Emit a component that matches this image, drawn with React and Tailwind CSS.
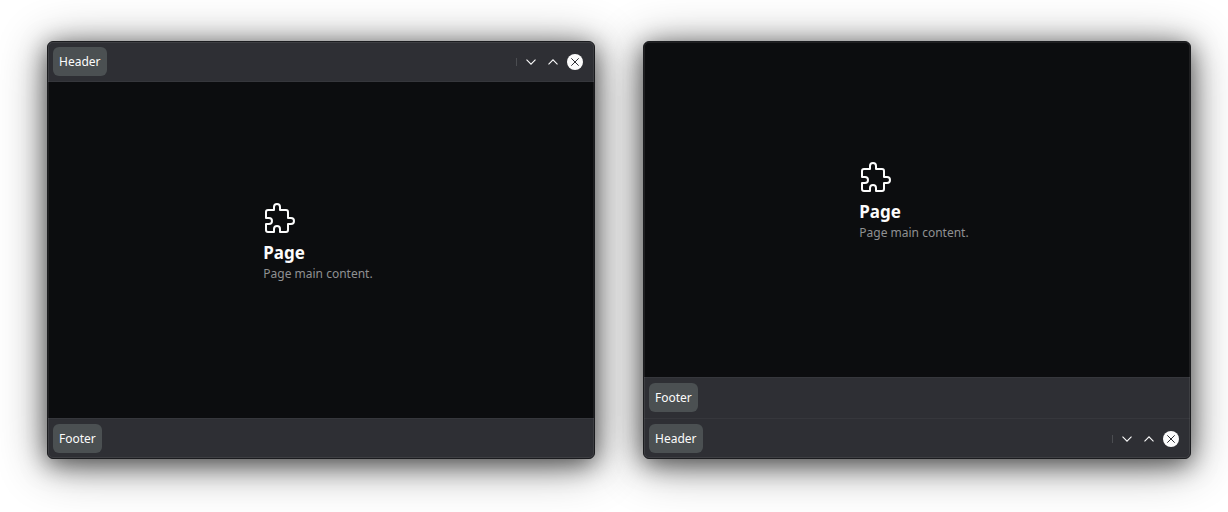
import React from "react";

function PuzzleIcon() {
  return (
    <svg
      viewBox="0 0 32 32"
      className="ml-px size-8"
      fill="none"
      stroke="#fcfcfc"
      strokeWidth="2"
      strokeLinejoin="round"
      aria-hidden="true"
    >
      <path d="M4 8H10V5a3 3 0 0 1 6 0V8h6a2 2 0 0 1 2 2v6h3a3 3 0 0 1 0 6h-3v6a2 2 0 0 1-2 2h-6v-3a3 3 0 0 0-6 0v3H4a2 2 0 0 1-2-2v-6h3a3 3 0 0 0 0-6H2v-6a2 2 0 0 1 2-2z" />
    </svg>
  );
}

function ToolButton({ children }) {
  return (
    <button type="button" className="h-[29px] rounded-md bg-[#4b5052] px-1.5 text-xs text-[#fcfcfc]">
      {children}
    </button>
  );
}

function WindowControls() {
  return (
    <div className="ml-auto flex items-center gap-1.5 pr-1.5">
      <span className="h-2 w-px bg-[#4b4d51]" />
      <button type="button" aria-label="Minimize" className="size-4">
        <svg viewBox="0 0 16 16" className="size-4" fill="none" stroke="#fcfcfc" strokeWidth="1.1">
          <path d="M3.5 5.7 8 10.2l4.5-4.5" />
        </svg>
      </button>
      <button type="button" aria-label="Maximize" className="size-4">
        <svg viewBox="0 0 16 16" className="size-4" fill="none" stroke="#fcfcfc" strokeWidth="1.1">
          <path d="M3.5 10.3 8 5.8l4.5 4.5" />
        </svg>
      </button>
      <button type="button" aria-label="Close" className="size-4">
        <svg viewBox="0 0 16 16" className="size-4" fill="none" stroke="#2e2f34" strokeWidth="1">
          <circle cx="8" cy="8" r="8" fill="#fcfcfc" stroke="none" />
          <path d="m4.3 4.3 7.4 7.4m0-7.4-7.4 7.4" />
        </svg>
      </button>
    </div>
  );
}

function HeaderBar({ atBottom }) {
  return (
    <header
      className={`flex items-center border-[#36373c] bg-[#2e2f34] p-[5px] ${atBottom ? "border-t" : "border-b"}`}
    >
      <ToolButton>Header</ToolButton>
      <WindowControls />
    </header>
  );
}

function FooterBar({ stacked }) {
  return (
    <footer
      className={`flex items-center border-t border-[#36373c] bg-[#2e2f34] px-[5px] pt-[5px] ${stacked ? "pb-1.5" : "pb-[5px]"}`}
    >
      <ToolButton>Footer</ToolButton>
    </footer>
  );
}

function PageContent() {
  return (
    <main className="flex flex-1 items-center justify-center bg-[#0c0d0f] pr-1.5">
      <div className="pb-[15px]">
        <PuzzleIcon />
        <h1 className="mt-2 text-[17px] leading-[22px] font-bold text-[#fcfcfc]">Page</h1>
        <p className="text-xs leading-5 text-[#8f9092]">Page main content.</p>
      </div>
    </main>
  );
}

function AppWindow({ children }) {
  return (
    <section className="relative flex min-h-[418px] flex-1 flex-col overflow-hidden rounded-md border border-[#1b1c1f] bg-[#2e2f34] shadow-[0_5px_24px_rgba(0,0,0,0.55),0_6px_48px_rgba(0,0,0,0.45)]">
      {children}
      <div className="pointer-events-none absolute inset-0 rounded-[5px] border border-white/8" />
    </section>
  );
}

export default function App() {
  return (
    <div className="flex min-h-screen items-start gap-12 bg-white pt-[41px] pr-[37px] pb-[53px] pl-[47px] font-['Noto_Sans',sans-serif]">
      <AppWindow>
        <HeaderBar />
        <PageContent />
        <FooterBar />
      </AppWindow>
      <AppWindow>
        <PageContent />
        <FooterBar stacked />
        <HeaderBar atBottom />
      </AppWindow>
    </div>
  );
}
